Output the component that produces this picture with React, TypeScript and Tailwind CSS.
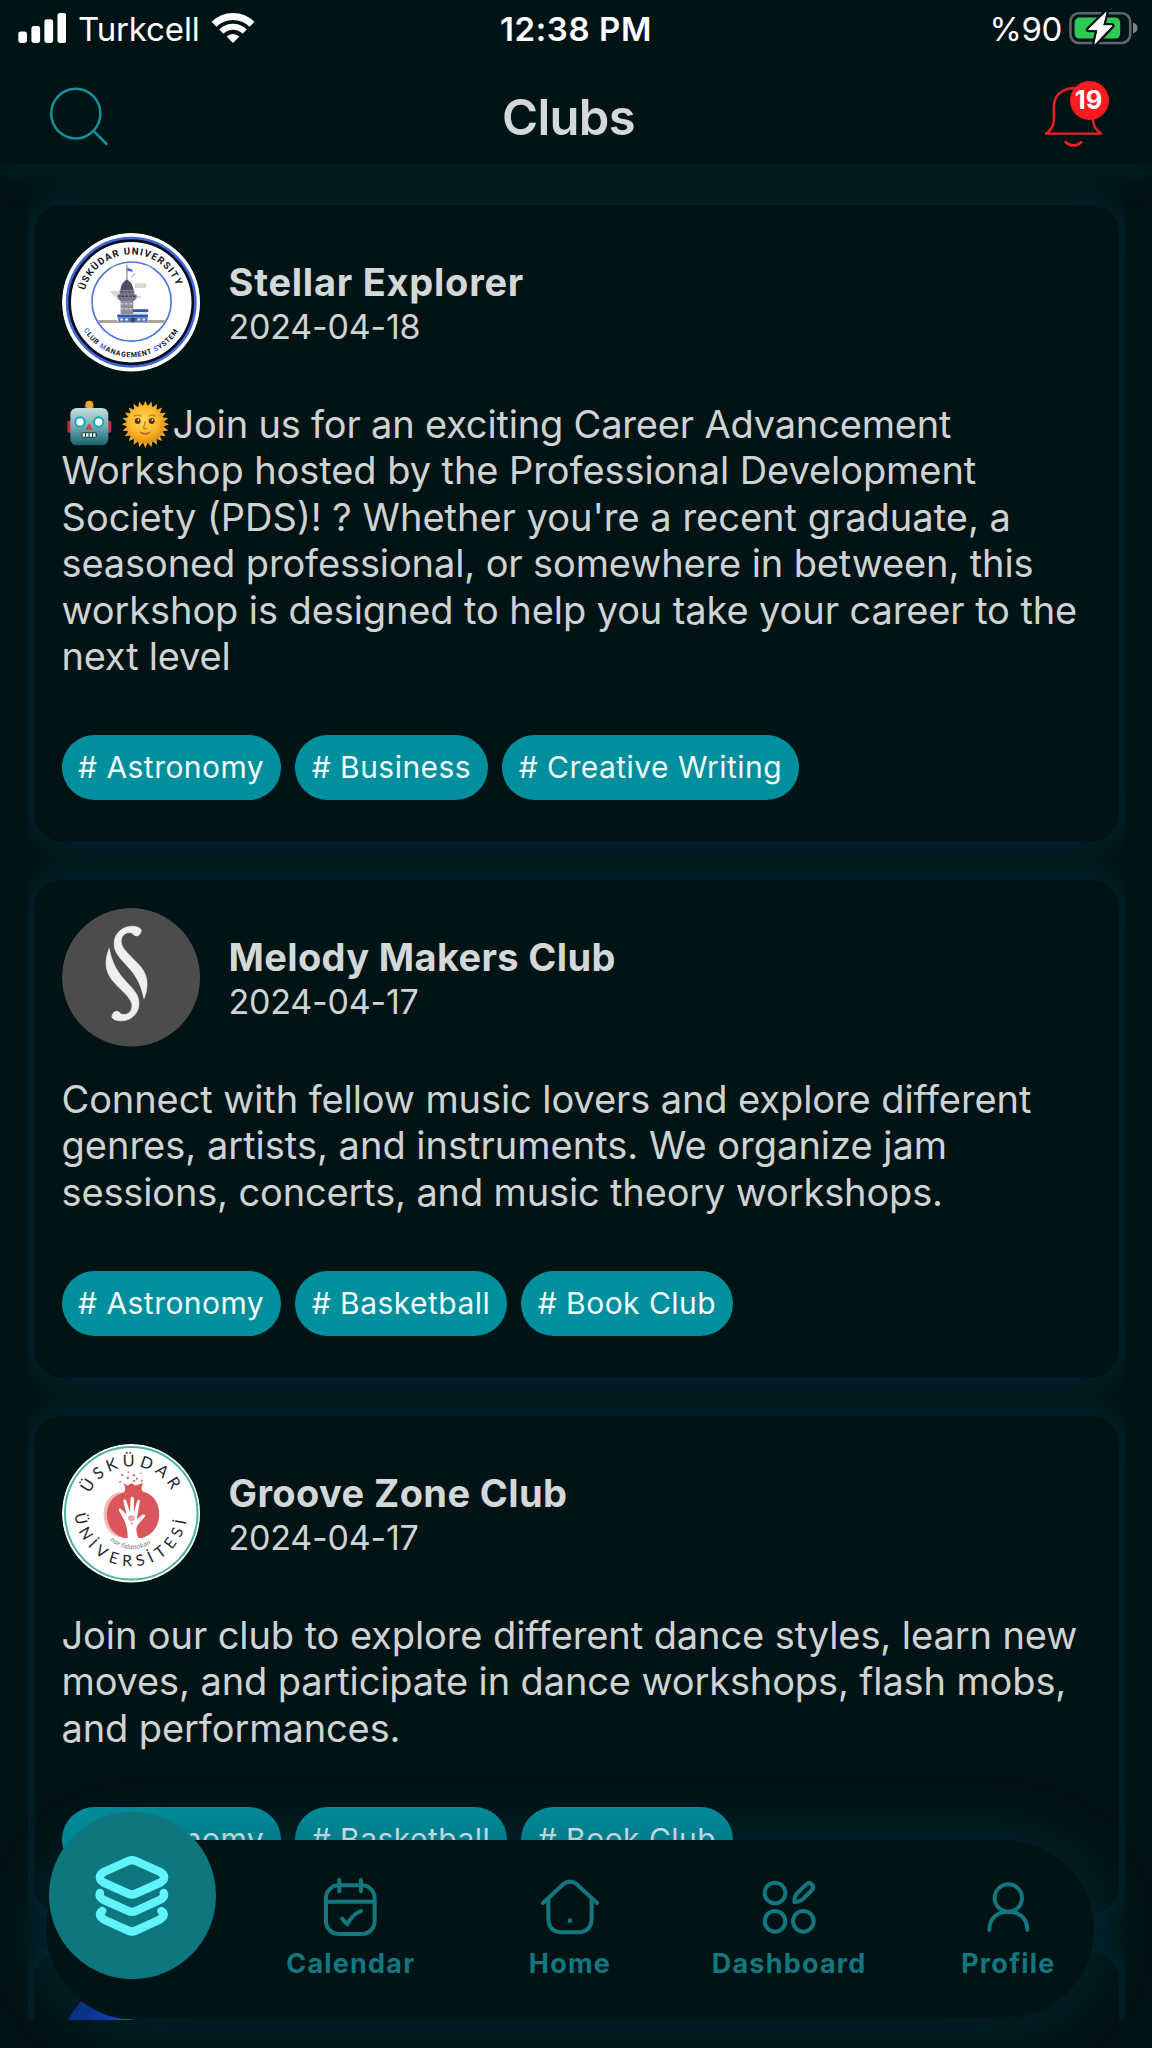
import type { ReactNode } from "react";

function StatusBar() {
  return (
    <div className="grid h-[58px] grid-cols-[1fr_auto_1fr] items-center pl-[18px] pr-[14px] text-[33px] leading-[58px] text-white">
      <div className="flex items-center">
        <svg width="48" height="58" viewBox="18 0 48 58" fill="#fff">
          <rect x="18.3" y="31.5" width="8.7" height="11.5" rx="2.4" />
          <rect x="31.4" y="26" width="8.7" height="17" rx="2.4" />
          <rect x="44.4" y="19.3" width="8.7" height="23.7" rx="2.4" />
          <rect x="57.5" y="13" width="8.7" height="30" rx="2.4" />
        </svg>
        <span className="ml-[12px] tracking-[-0.15px]">Turkcell</span>
        <svg className="ml-[11.5px]" width="44" height="58" viewBox="211 0 44 58" fill="none" stroke="#fff">
          <path d="M214 24.2 A27 27 0 0 1 252 24.2" strokeWidth="7" />
          <path d="M221.3 31.6 A16.5 16.5 0 0 1 244.7 31.6" strokeWidth="6" />
          <path d="M226.6 36.6 A9 9 0 0 1 239.4 36.6 L233 43 Z" fill="#fff" stroke="none" />
        </svg>
      </div>
      <span className="mr-[4px] font-semibold tracking-[0.6px]">12:38 PM</span>
      <div className="flex items-center justify-end">
        <span className="tracking-[-0.4px]">%90</span>
        <svg className="ml-[7px]" width="69" height="58" viewBox="1069 0 69 58">
          <rect x="1070.4" y="13.2" width="59.8" height="29.8" rx="8.5" fill="none" stroke="#5d686a" strokeWidth="2.6" />
          <path d="M1133 22.5 Q1137.5 24 1137.5 28 Q1137.5 32 1133 33.5 Z" fill="#7c8486" />
          <rect x="1074.6" y="17.6" width="45.6" height="21" rx="5" fill="#30c957" />
          <path
            d="M1106 12.4 L1088.6 29.6 H1098 L1095 43.6 L1111.8 25.8 H1102.6 Z"
            fill="#fff"
            stroke="#001315"
            strokeWidth="5.5"
            strokeLinejoin="round"
            paintOrder="stroke"
          />
          <path d="M1106 12.4 L1088.6 29.6 H1098 L1095 43.6 L1111.8 25.8 H1102.6 Z" fill="#fff" stroke="#fff" strokeWidth="1" strokeLinejoin="round" />
        </svg>
      </div>
    </div>
  );
}

function Header() {
  return (
    <header className="relative z-10 h-[164px] shrink-0 bg-[#001315] shadow-[0_0_34px_4px_rgba(0,66,88,0.36)]">
      <StatusBar />
      <div className="grid h-[106px] grid-cols-[1fr_auto_1fr] items-center px-[42px]">
        <svg width="72" height="72" viewBox="42 75 72 72" fill="none" stroke="#12939a" strokeWidth="2.5" strokeLinecap="round">
          <ellipse cx="75.8" cy="113.6" rx="24.6" ry="24.8" />
          <path d="M93.5 130.8 L106.5 144" />
        </svg>
        <h1 className="mr-[15px] pt-[14px] text-[49px] font-semibold leading-[60px] tracking-[-0.7px] text-[#d5d8d9]">Clubs</h1>
        <div className="relative h-[72px] w-[72px] justify-self-end">
          <svg width="72" height="72" viewBox="1038 75 72 72" className="overflow-visible" fill="none" stroke="#ec2228" strokeWidth="2.4" strokeLinecap="round" strokeLinejoin="round">
            <path d="M1073.5 88.2 C1062 88.2 1053.8 96 1053.8 107 V120 Q1053.8 128.5 1046 133.6 H1101 Q1093.2 128.5 1093.2 120 V107 C1093.2 96 1085 88.2 1073.5 88.2 Z" />
            <path d="M1065.5 142 Q1073.5 149.2 1081.5 142" />
          </svg>
          <span className="absolute left-[32px] top-[6px] flex h-[39px] w-[39px] items-center justify-center rounded-full bg-[#fc1c20] text-[25.5px] font-bold leading-none text-white">
            <span className="-ml-[2px] -mt-[2px]">19</span>
          </span>
        </div>
      </div>
    </header>
  );
}

function UniversityLogo() {
  return (
    <svg viewBox="65 39 416 416" className="h-full w-full">
      <defs>
        <path id="uni-top" d="M134 211 A144 144 0 0 1 411 205" />
        <path id="uni-bottom" d="M130 330 A166 166 0 0 0 419 325" />
      </defs>
      <circle cx="273" cy="247" r="208" fill="#fff" />
      <circle cx="273" cy="247" r="192" fill="none" stroke="#4168d8" strokeWidth="9" />
      <circle cx="273" cy="247" r="185" fill="none" stroke="#070d24" strokeWidth="8" />
      <circle cx="274" cy="245" r="119" fill="none" stroke="#4a76e0" strokeWidth="5" />
      <text fontFamily="Roboto, sans-serif" fontWeight="700" fontSize="29" letterSpacing="3.6" fill="#101522">
        <textPath href="#uni-top">ÜSKÜDAR UNIVERSITY</textPath>
      </text>
      <text fontFamily="Roboto, sans-serif" fontWeight="700" fontSize="21" letterSpacing="2.4" fill="#101522">
        <textPath href="#uni-bottom">
          <tspan fill="#4a76e0">C</tspan>LUB <tspan fill="#4a76e0">M</tspan>ANAGEMENT <tspan fill="#4a76e0">S</tspan>YSTEM
        </textPath>
      </text>
      <path d="M210 213 H232 L240 222 L232 236 L215 224 Z M283 190 H318 V204 H283 Z M284 228 H302 V234 H284 Z" fill="#d9dad8" />
      <path d="M260 134 V184" stroke="#6c7088" strokeWidth="3" />
      <path d="M261 145 Q268 143 277 151 V156 Q268 152 261 153 Z" fill="#3b66c9" />
      <path d="M273 172 l5 -4 l2 -4 l5 -1" stroke="#888" strokeWidth="2.5" fill="none" />
      <path d="M260 179 C250 184 242 194 240 212 H280 C278 194 270 184 260 179 Z" fill="#4c4e63" />
      <path d="M238 211 H282 V224 H289 V236 L281 243 H240 L232 236 V224 H238 Z" fill="#77798a" />
      <path d="M234 229 H287 M242 216 H279" stroke="#3c3f58" strokeWidth="4" strokeDasharray="7 4" />
      <rect x="241" y="243" width="38" height="40" fill="#8d8f9b" />
      <path d="M241 252 H279 M241 267 H279" stroke="#d8dbe2" strokeWidth="4" strokeDasharray="8 5" />
      <rect x="278" y="268" width="46" height="9" fill="#2b55b5" />
      <rect x="280" y="277" width="42" height="8" fill="#dfe5f3" />
      <rect x="231" y="284" width="92" height="9" fill="#2b55b5" />
      <rect x="234" y="293" width="88" height="13" fill="#5672b4" />
      <path d="M240 299 H268 M292 299 H318" stroke="#e8edf8" strokeWidth="6" strokeDasharray="8 7" />
      <path d="M271 306 V296 Q278 288 285 296 V306 Z" fill="#464a60" />
      <path d="M174 300 H231 V306 H323 V300 H374 L372 309 H177 Z" fill="#aaa49f" />
    </svg>
  );
}

const SECTION_STROKE =
  "M303 123 C300 110 268 105 246 119 C222 134 216 163 228 188 C246 224 296 244 311 327 C325 291 323 263 306 238 C288 212 251 187 244 164 C238 141 256 124 276 131 C284 145 301 141 303 123 Z";

function SectionLogo() {
  return (
    <svg viewBox="66 56 414 414" className="h-full w-full">
      <circle cx="273" cy="263" r="207" fill="#4d4c4d" />
      <g fill="#f0eef1" stroke="#f0eef1" strokeWidth="2">
        <path d={SECTION_STROKE} />
        <path d={SECTION_STROKE} transform="rotate(180 259 252)" />
      </g>
    </svg>
  );
}

function PomegranateLogo() {
  return (
    <svg viewBox="65 43 416 416" className="h-full w-full">
      <defs>
        <path id="pom-top" d="M148 193 A137 137 0 0 1 402 199" />
        <path id="pom-bottom" d="M104 254 A169.5 169.5 0 0 0 442 254" />
        <path id="pom-small" d="M209 333 Q275 383 343 336" />
      </defs>
      <circle cx="273" cy="251" r="208" fill="#fff" />
      <circle cx="273" cy="251" r="199" fill="none" stroke="#4db39d" strokeWidth="6" />
      <text fontFamily="Lato, sans-serif" fontSize="49" letterSpacing="12.5" fill="#26292e">
        <textPath href="#pom-top">ÜSKÜDAR</textPath>
      </text>
      <text fontFamily="Lato, sans-serif" fontSize="47" letterSpacing="16.5" fill="#26292e">
        <textPath href="#pom-bottom">ÜNİVERSİTESİ</textPath>
      </text>
      <text fontFamily="Lato, sans-serif" fontStyle="italic" fontSize="21" letterSpacing="1" fill="#6d7378">
        <textPath href="#pom-small">nar fidanokan</textPath>
      </text>
      <path d="M245 186 C210 190 190 220 190 254 C190 296 215 320 244 324 C212 300 202 268 210 238 C215 215 228 198 245 186 Z" fill="#f0b9b7" />
      <path
        d="M248 160 L262 168 L274 161 L286 168 L309 160 Q300 172 307 186 C340 194 358 222 357 256 C356 292 335 316 306 325 H250 C216 312 199 288 200 252 C201 220 220 196 252 187 Q259 173 248 160 Z"
        fill="#d9565a"
      />
      <path
        d="M262 325 C263 303 258 290 253 274 L236 243 Q234 235 240 237 L259 254 L249 214 Q252 205 258 213 L269 248 L271 206 Q276 197 281 206 L281 249 L291 214 Q297 207 299 215 L292 256 L290 268 L308 255 Q318 254 314 261 L294 284 C286 296 287 308 295 325 Z"
        fill="#fff"
      />
      <path d="M263 262 l8 -6 l12 4 l1 10 l-9 6 l-10 -4 Z M268 280 l12 -2 l-3 8 Z" fill="#e9a9a9" />
      <g fill="#df6d70">
        <rect x="243" y="133" width="6" height="6" />
        <rect x="262" y="125" width="5" height="5" />
        <rect x="277" y="134" width="7" height="6" />
        <rect x="259" y="141" width="7" height="7" />
        <rect x="287" y="144" width="6" height="6" />
        <rect x="301" y="150" width="6" height="6" />
        <rect x="237" y="154" width="5" height="5" />
        <rect x="278" y="151" width="6" height="6" />
        <rect x="300" y="129" width="4" height="4" />
      </g>
    </svg>
  );
}

function BlueLogo() {
  return <div className="h-full w-full bg-[linear-gradient(100deg,#0a2f80_0%,#0c2f96_18%,#1d35c8_32%,#3a45d8_42%,#dfe3ff_47%)]" />;
}

const SUN_RAYS = Array.from({ length: 24 }, (_, i) => i * 15);

function Emojis() {
  return (
    <svg className="inline-block h-[46px] w-[111px] overflow-visible align-top" viewBox="20 25 333 138">
      <defs>
        <linearGradient id="robot" x1="0" y1="0" x2="0" y2="1">
          <stop offset="0" stopColor="#c6dfe0" />
          <stop offset="0.55" stopColor="#69a5af" />
          <stop offset="1" stopColor="#17606b" />
        </linearGradient>
        <radialGradient id="sun" cx="0.45" cy="0.4" r="0.65">
          <stop offset="0" stopColor="#ffd95e" />
          <stop offset="0.6" stopColor="#f9b62a" />
          <stop offset="1" stopColor="#d98412" />
        </radialGradient>
      </defs>
      <rect x="36" y="84" width="12" height="36" rx="5" fill="#c22a37" />
      <rect x="156" y="84" width="12" height="36" rx="5" fill="#c22a37" />
      <path d="M87 50 V38 H116 V50 Z" fill="#683a68" />
      <circle cx="102" cy="36" r="12" fill="#f2a527" />
      <rect x="45" y="46" width="114" height="112" rx="19" fill="url(#robot)" />
      <circle cx="74" cy="88" r="17" fill="#17a3b8" />
      <circle cx="130" cy="88" r="17" fill="#17a3b8" />
      <circle cx="74" cy="88" r="11" fill="#f4ffff" />
      <circle cx="130" cy="88" r="11" fill="#f4ffff" />
      <path d="M102 92 L112 111 H91 Z" fill="#d33d3c" />
      <rect x="78" y="119" width="47" height="16" rx="5" fill="#20434b" />
      <path d="M82 127 H122" stroke="#fff" strokeWidth="11" strokeDasharray="7 3.5" />
      {SUN_RAYS.map((angle) => (
        <path key={angle} d="M261 45 L270 24 L279 45 Z" fill="#f3ac26" transform={`rotate(${angle} 270 95)`} />
      ))}
      <circle cx="270" cy="95" r="57" fill="url(#sun)" />
      <circle cx="247" cy="85" r="9" fill="#5a3513" />
      <circle cx="289" cy="85" r="9" fill="#5a3513" />
      <circle cx="249" cy="82" r="2.5" fill="#fff" />
      <circle cx="291" cy="82" r="2.5" fill="#fff" />
      <path d="M236 71 Q247 64 257 71 M280 71 Q290 64 300 71" stroke="#c57d12" strokeWidth="4" fill="none" />
      <path d="M270 86 L265 106 Q269 111 275 106" stroke="#c57d12" strokeWidth="4" fill="none" />
      <path d="M254 119 Q269 133 285 119 Q270 124 254 119 Z" fill="#b96313" stroke="#b96313" strokeWidth="2" />
    </svg>
  );
}

type Line = { text: string; tracking: string; lead?: ReactNode };
type Club = { name: string; nameTracking: string; date: string; logo: ReactNode; lines: Line[]; tags: string[] };

const CLUBS: Club[] = [
  {
    name: "Stellar Explorer",
    nameTracking: "tracking-[0.75px]",
    date: "2024-04-18",
    logo: <UniversityLogo />,
    lines: [
      { text: "Join us for an exciting Career Advancement", tracking: "tracking-[-0.18px]", lead: <Emojis /> },
      { text: "Workshop hosted by the Professional Development", tracking: "tracking-[-0.07px]" },
      { text: "Society (PDS)! ? Whether you're a recent graduate, a", tracking: "tracking-[0px]" },
      { text: "seasoned professional, or somewhere in between, this", tracking: "tracking-[-0.12px]" },
      { text: "workshop is designed to help you take your career to the", tracking: "tracking-[-0.1px]" },
      { text: "next level", tracking: "tracking-[-0.2px]" },
    ],
    tags: ["Astronomy", "Business", "Creative Writing"],
  },
  {
    name: "Melody Makers Club",
    nameTracking: "tracking-[0.35px]",
    date: "2024-04-17",
    logo: <SectionLogo />,
    lines: [
      { text: "Connect with fellow music lovers and explore different", tracking: "tracking-[-0.09px]" },
      { text: "genres, artists, and instruments. We organize jam", tracking: "tracking-[0px]" },
      { text: "sessions, concerts, and music theory workshops.", tracking: "tracking-[-0.15px]" },
    ],
    tags: ["Astronomy", "Basketball", "Book Club"],
  },
  {
    name: "Groove Zone Club",
    nameTracking: "tracking-[0.4px]",
    date: "2024-04-17",
    logo: <PomegranateLogo />,
    lines: [
      { text: "Join our club to explore different dance styles, learn new", tracking: "tracking-[-0.09px]" },
      { text: "moves, and participate in dance workshops, flash mobs,", tracking: "tracking-[-0.12px]" },
      { text: "and performances.", tracking: "tracking-[-0.1px]" },
    ],
    tags: ["Astronomy", "Basketball", "Book Club"],
  },
  { name: "", nameTracking: "", date: "", logo: <BlueLogo />, lines: [], tags: [] },
];

function ClubCard({ club }: { club: Club }) {
  return (
    <article className="min-h-[497px] shrink-0 rounded-[27px] bg-[#001315] px-[27.5px] pb-[41px] pt-[28px] shadow-[0_0_36px_5px_rgba(0,66,88,0.42)]">
      <div className="flex items-center gap-[28.5px]">
        <div className="h-[138.5px] w-[138.5px] shrink-0 overflow-hidden rounded-full">{club.logo}</div>
        <div className="pt-[3px]">
          <h2 className={`text-[38px] font-bold leading-[46px] text-[#d5d8d9] ${club.nameTracking}`}>{club.name}</h2>
          <p className="text-[34px] leading-[43px] tracking-[-0.2px] text-[#d0d3d4]">{club.date}</p>
        </div>
      </div>
      <p className="mt-[29px] whitespace-nowrap text-[38px] leading-[46.5px] text-[#d0d3d4]">
        {club.lines.map((line) => (
          <span key={line.text} className={`block h-[46.5px] ${line.tracking}`}>
            {line.lead}
            {line.text}
          </span>
        ))}
      </p>
      <div className="mt-[55.5px] flex gap-[14.5px]">
        {club.tags.map((tag) => (
          <span key={tag} className="h-[65px] rounded-full bg-[#008f9c] px-[16.5px] text-[30px] leading-[65px] tracking-[0.47px] text-[#f2fbfc]">
            # {tag}
          </span>
        ))}
      </div>
    </article>
  );
}

function NavItem({ label, children }: { label: string; children: ReactNode }) {
  return (
    <div className="flex flex-col items-center pt-[37px] text-[#12777f]">
      <div className="h-[60px] [&>svg]:h-full">{children}</div>
      <span className="mt-[9.5px] text-[27px] font-bold leading-[34px] tracking-[1.2px]">{label}</span>
    </div>
  );
}

function BottomNav() {
  return (
    <nav className="absolute left-[46px] top-[1840px] z-20 h-[180px] w-[1048px] rounded-full border-b-[3px] border-[#00191f] bg-[#001315] shadow-[0_0_56px_5px_rgba(0,66,88,0.42)]">
      <div className="-ml-[24px] -mr-[24px] grid grid-cols-5">
        <div className="flex justify-center">
          <button className="-mt-[28px] ml-[1px] flex h-[167px] w-[167px] items-center justify-center rounded-full bg-[#0e767e]" aria-label="Clubs">
            <svg width="84" height="90" viewBox="274 213 252 270" fill="none" stroke="#62f4fe" strokeWidth="25" strokeLinecap="round" strokeLinejoin="round">
              <path d="M389 243 Q400 238 411 243 L485 276 Q508 292 485 308 L411 341 Q400 346 389 341 L315 308 Q292 292 315 276 Z" />
              <path d="M304 339 Q298 352 318 361 L389 393 Q400 398 411 393 L481 361 Q501 352 495 339" />
              <path d="M311 393 Q294 404 318 420 L389 452 Q400 457 411 452 L481 420 Q505 404 488 393" />
            </svg>
          </button>
        </div>
        <NavItem label="Calendar">
          <svg viewBox="972 292 164 180" fill="none" stroke="currentColor" strokeWidth="12" strokeLinecap="round" strokeLinejoin="round">
            <rect x="981" y="317" width="146" height="146" rx="38" />
            <path d="M1021 301 V335 M1086 301 V335 M981 366 H1127" />
            <path d="M1029 417 L1045 434 Q1058 406 1086 394" />
          </svg>
        </NavItem>
        <NavItem label="Home">
          <svg viewBox="420 292 180 180" fill="none" stroke="currentColor" strokeWidth="12" strokeLinecap="round" strokeLinejoin="round">
            <path d="M429 370 L488 315 Q510 297 532 315 L591 370" />
            <path d="M445 358 V415 Q445 458 488 458 H532 Q575 458 575 415 V358" />
            <circle cx="510" cy="423" r="7" fill="currentColor" stroke="none" />
          </svg>
        </NavItem>
        <NavItem label="Dashboard">
          <svg viewBox="26 292 174 180" fill="none" stroke="currentColor" strokeWidth="12" strokeLinejoin="round">
            <circle cx="71" cy="340" r="31" />
            <circle cx="71" cy="425" r="31" />
            <circle cx="156" cy="425" r="31" />
            <path d="M129 367 C129 352 132 346 138 340 L166 313 Q174 306 182 314 Q189 322 182 331 L155 358 C148 364 142 367 129 367 Z" />
          </svg>
        </NavItem>
        <NavItem label="Profile">
          <svg viewBox="700 292 140 180" fill="none" stroke="currentColor" strokeWidth="12" strokeLinecap="round">
            <circle cx="770" cy="355" r="41" />
            <path d="M713 451 C713 415 738 396 770 396 C802 396 827 415 827 451" />
          </svg>
        </NavItem>
      </div>
    </nav>
  );
}

export default function App() {
  return (
    <div className="relative flex h-[2048px] w-[1152px] flex-col overflow-hidden bg-[#001315] font-[Inter,sans-serif]">
      <Header />
      <main className="ml-[28px] mr-[27px] flex h-[1856px] flex-col gap-[39px] overflow-hidden px-[6px] pt-[41px]">
        {CLUBS.map((club, i) => (
          <ClubCard key={i} club={club} />
        ))}
      </main>
      <BottomNav />
    </div>
  );
}
